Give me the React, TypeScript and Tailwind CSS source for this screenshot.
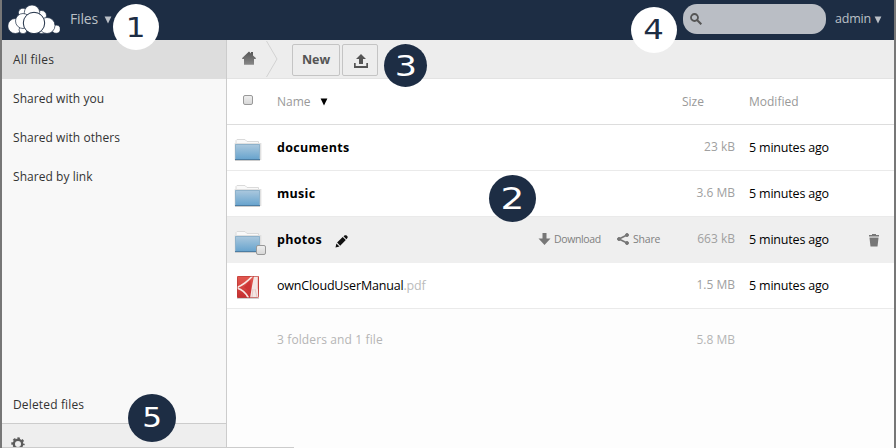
import React from "react";

function Badge({ n, className, digit }: { n: number; className: string; digit: string }) {
  return (
    <div className={`absolute z-10 flex items-center justify-center rounded-full font-['DejaVu_Sans',sans-serif] ${className}`}>
      <span className={`block leading-none ${digit}`}>{n}</span>
    </div>
  );
}

function Logo() {
  return (
    <svg className="block" width="52" height="30" viewBox="0 0 52 30" fill="#fff" stroke="#1d2d44" strokeWidth="0.7">
      <circle cx="15" cy="7.8" r="4.6" />
      <circle cx="33.5" cy="10.5" r="5" />
      <circle cx="24" cy="7.7" r="7.7" />
      <circle cx="7.3" cy="21" r="7.5" />
      <circle cx="48.2" cy="24.2" r="4.1" />
      <circle cx="15" cy="24.8" r="4" />
      <circle cx="34" cy="25.2" r="3.6" />
      <circle cx="15" cy="16" r="7.5" />
      <circle cx="39" cy="20.5" r="8" />
      <circle cx="26" cy="18" r="10.7" strokeWidth="1" />
    </svg>
  );
}

function Folder() {
  return (
    <svg className="block" width="28" height="24" viewBox="0 0 28 24">
      <defs>
        <linearGradient id="folder" x1="0" y1="0" x2="0" y2="1">
          <stop offset="0" stopColor="#adc9de" />
          <stop offset="1" stopColor="#65a2cd" />
        </linearGradient>
      </defs>
      <path d="M2 7V2.5l1-1h8l2 2h11.5V7" fill="#f9f9f9" stroke="#dadada" />
      <rect x="0.6" y="5" width="26.8" height="17" fill="#e0e0e0" />
      <rect x="1" y="6" width="25" height="16" fill="url(#folder)" />
      <path d="M1.5 21.5V6.5h24v15" fill="none" stroke="#8eb2cb" />
      <path d="M1 21.5h25" stroke="#4c7da3" />
      <path d="M1 22.5h25" stroke="#ccc" />
    </svg>
  );
}

function Pdf() {
  return (
    <svg className="block" width="24" height="24" viewBox="0 0 24 24">
      <defs>
        <linearGradient id="pdf" x1="0" y1="0" x2="0" y2="1">
          <stop offset="0" stopColor="#e35950" />
          <stop offset="1" stopColor="#c52e30" />
        </linearGradient>
      </defs>
      <rect x="1" y="1" width="22" height="22" rx="1" fill="url(#pdf)" />
      <path d="M18 1h3.8v12l1 10H14l2-12z" fill="#f4e6e4" />
      <path d="M16.5 1C12 6 7 10 1 12.5M1 13c5 1.5 9 5 11.5 10" stroke="#f7e6e2" strokeWidth="1.8" fill="none" />
      <path d="M14.5 5l.3 13L8 12z" fill="#cd3536" />
      <path d="M17 14l-1 8M19 14l2 8" fill="none" stroke="#dfb9b5" strokeWidth="0.7" />
      <rect x="1.5" y="1.5" width="21" height="21" rx="1" fill="none" stroke="#b83b36" strokeOpacity="0.65" />
      <path d="M1 23.4h22" stroke="#999" strokeWidth="0.5" />
    </svg>
  );
}

function Check({ className = "" }: { className?: string }) {
  return <span className={`block size-[10px] rounded-[2px] border border-[#999] bg-gradient-to-b from-[#eee] to-[#d8d8d8] ${className}`} />;
}

function Triangle({ className }: { className: string }) {
  return <svg className={`block shrink-0 ${className}`} width="8" height="8" viewBox="0 0 8 8" fill="currentColor"><path d="M0.6 0.5h6.8L4 7.6z" /></svg>;
}

type Row = { name: string; ext?: string; size: string; active?: boolean };
const rows: Row[] = [
  { name: "documents", size: "23 kB" },
  { name: "music", size: "3.6 MB" },
  { name: "photos", size: "663 kB", active: true },
  { name: "ownCloudUserManual", ext: ".pdf", size: "1.5 MB" },
];

function FileRow({ row }: { row: Row }) {
  return (
    <div className={`flex h-[46px] items-center border-b ${row.active ? "border-[#efefef] bg-[#efefef]" : "border-[#eaeaea]"}`}>
      <div className="relative flex w-[50px] shrink-0 pl-[7px] pt-[5px]">
        {row.ext ? <div className="mt-[-2px] pl-[2px]"><Pdf /></div> : <Folder />}
        {row.active && <Check className="absolute bottom-[-1px] left-[29px]" />}
      </div>
      <div className="flex flex-1 items-center">
        <span className={row.ext ? "text-[12.5px] tracking-[-0.17px]" : "text-[12.5px] font-bold tracking-[0.3px]"}>
          {row.name}<span className="text-[#bbb]">{row.ext}</span>
        </span>
        {row.active && (
          <svg className="ml-[13px] mt-[3px]" width="13" height="13" viewBox="0 0 13 13" fill="#111">
            <path d="M.5 12.5l.9-4 3.1 3zM2.1 7.6L7.7 2l3.1 3-5.6 5.7zM8.5 1.3L9.8.2h1.5l1.3 1.4v1.2l-1.2 1.4z" />
          </svg>
        )}
      </div>
      {row.active && (
        <div className="flex items-center pb-px text-[10.5px] text-[#808080]">
          <svg width="13" height="12" viewBox="0 0 13 12" fill="#777"><path d="M4.5 0h4v5.5h4L6.5 12 .5 5.5h4z" /></svg>
          <span className="ml-[3px] w-[63px] tracking-[-0.38px]">Download</span>
          <svg width="12" height="12" viewBox="0 0 12 12" fill="#777" stroke="#777"><path d="M10 2L2 6l8 4" fill="none" strokeWidth="1.7" /><circle cx="2" cy="6" r="1.5" /><circle cx="10" cy="2" r="1.5" /><circle cx="10" cy="10" r="1.5" /></svg>
          <span className="ml-[4px] w-[28px] tracking-[-0.2px]">Share</span>
        </div>
      )}
      <div className="w-[74px] pb-px text-right text-[#a0a0a0]">{row.size}</div>
      <div className="flex w-[159px] items-center pl-[14px]">
        <span className="w-[119px] text-[12.5px] tracking-[-0.19px]">5 minutes ago</span>
        {row.active && (
          <svg className="mt-[2px]" width="12" height="13" viewBox="0 0 12 13" fill="#777">
            <path d="M4 0h4v1h3v1.5H1V1h3zM1.5 4h9l-1 8.5h-7z" /><path d="M1.5 3h9v1h-9z" fill="#bbb" />
          </svg>
        )}
      </div>
    </div>
  );
}

export default function App() {
  return (
    <div className="relative flex h-[448px] w-[896px] flex-col overflow-hidden border-l-2 border-r-2 border-l-[#777] border-r-[#777] bg-white font-['Open_Sans','Noto_Sans',sans-serif] text-[12px] leading-[18px] text-black">
      <header className="flex h-10 shrink-0 items-center bg-[#1d2d44] text-[#bbc0c7]">
        <div className="ml-[6px]"><Logo /></div>
        <span className="ml-[10px] mt-[-2px] w-[28px] text-[14px] tracking-[-0.15px]">Files</span>
        <Triangle className="ml-[6px]" />
        <div className="ml-auto mr-[9px] mt-[-2px] flex h-[30px] w-[143px] items-center rounded-[14px] bg-[#babec5] pl-[7px]">
          <svg width="12" height="12" viewBox="0 0 12 12" fill="none" stroke="#555"><circle cx="4.5" cy="4.5" r="3.5" strokeWidth="1.8" /><path d="M7 7l4.3 4.3" strokeWidth="2" /></svg>
        </div>
        <span className="mt-[-2px] w-[35px] text-[12.5px] tracking-[-0.2px]">admin</span>
        <Triangle className="ml-[4px] mr-[12px]" />
      </header>

      <div className="flex min-h-0 flex-1">
        <aside className="flex w-[225px] shrink-0 flex-col border-r border-[#ccc] bg-[#f8f8f8] text-[#333]">
          <nav className="flex flex-1 flex-col tracking-[0.05px]">
            {["All files", "Shared with you", "Shared with others", "Shared by link"].map((t, i) => (
              <div key={t} className={`flex h-[39px] items-center pl-[11px] ${i === 0 ? "bg-[#ddd] tracking-[0.2px]" : ""}`}>{t}</div>
            ))}
            <div className="mt-auto flex h-[37px] items-center pl-[11px] tracking-[0.15px]">Deleted files</div>
          </nav>
          <div className="h-[25px] border-t border-[#ccc] bg-[#eee] pl-[9px] pt-[13px]">
            <svg width="14" height="14" viewBox="0 0 14 14" fill="none" stroke="#5c5c5c"><circle cx="7" cy="7" r="4.2" strokeWidth="2.4" /><circle cx="7" cy="7" r="5.6" strokeWidth="2.2" strokeDasharray="2.4 1.998" strokeDashoffset="1.2" /></svg>
          </div>
        </aside>

        <main className="flex flex-1 flex-col">
          <div className="flex h-[39px] items-center border-b border-[#e3e3e3] bg-[#ededed]">
            <svg className="ml-[15px] mt-[-2px]" width="14" height="14" viewBox="0 0 14 14"><defs><linearGradient id="home" x1="0" y1="0" x2="0" y2="1"><stop stopColor="#555" /><stop offset="1" stopColor="#888" /></linearGradient></defs><path d="M7 .5l2 2V1h2v3.4L13.8 7v1H12v5.7H2V8H.2V7z" fill="url(#home)" /></svg>
            <svg className="ml-[10px]" width="12" height="38" viewBox="0 0 12 38"><path d="M.5 1L11 19 .5 37" fill="none" stroke="#d2d2d2" /></svg>
            <div className="ml-[14px] mt-[2px] flex h-8 w-12 items-center justify-center rounded-[2px] border border-[#c4c4c4] pb-px text-[12.5px] font-bold text-[#555]">New</div>
            <div className="ml-[2px] mt-[2px] flex h-8 w-9 items-center justify-center rounded-[2px] border border-[#c4c4c4]">
              <svg className="ml-[2px] mt-[2px]" width="14" height="14" viewBox="0 0 14 14" fill="#555"><path d="M7 0l5 5H9v5H5V5H2zM0 9h1.7v3h10.6V9H14v5H0z" /></svg>
            </div>
          </div>
          <div className="flex h-[46px] items-center border-b border-[#ddd] text-[#999]">
            <div className="w-[50px] pb-[3px] pl-4"><Check /></div>
            <span>Name</span>
            <Triangle className="ml-[9px] mt-px text-black" />
            <span className="ml-auto w-[67px]">Size</span>
            <span className="w-[145px]">Modified</span>
          </div>
          {rows.map((row) => <FileRow key={row.name} row={row} />)}
          <div className="flex flex-1 items-start bg-[#fdfdfd] pt-[22px] text-[#b5b5b5]">
            <span className="flex-1 pl-[50px] tracking-[0.12px]">3 folders and 1 file</span>
            <span className="mr-[159px]">5.8 MB</span>
          </div>
        </main>
      </div>

      <div className="absolute bottom-0 left-0 h-px w-[292px] bg-[#ccc]" />
      <Badge n={1} className="left-[111px] top-[4px] size-[46px] bg-white text-[#1d2d44]" digit="text-[27px] scale-x-[1.15]" />
      <Badge n={2} className="left-[487px] top-[175px] size-[47px] bg-[#1d2d44] text-white" digit="text-[30px] scale-x-[1.25]" />
      <Badge n={3} className="left-[382px] top-[44px] size-[43px] bg-[#1d2d44] text-white" digit="text-[28px] scale-x-[1.25] mt-[2px]" />
      <Badge n={4} className="left-[629px] top-[7px] size-[46px] bg-white text-[#1d2d44]" digit="text-[27px] scale-x-[1.2] mt-[-1px]" />
      <Badge n={5} className="left-[126px] top-[394px] size-[48px] bg-[#1d2d44] text-white" digit="text-[26px] scale-x-[1.2]" />
    </div>
  );
}
